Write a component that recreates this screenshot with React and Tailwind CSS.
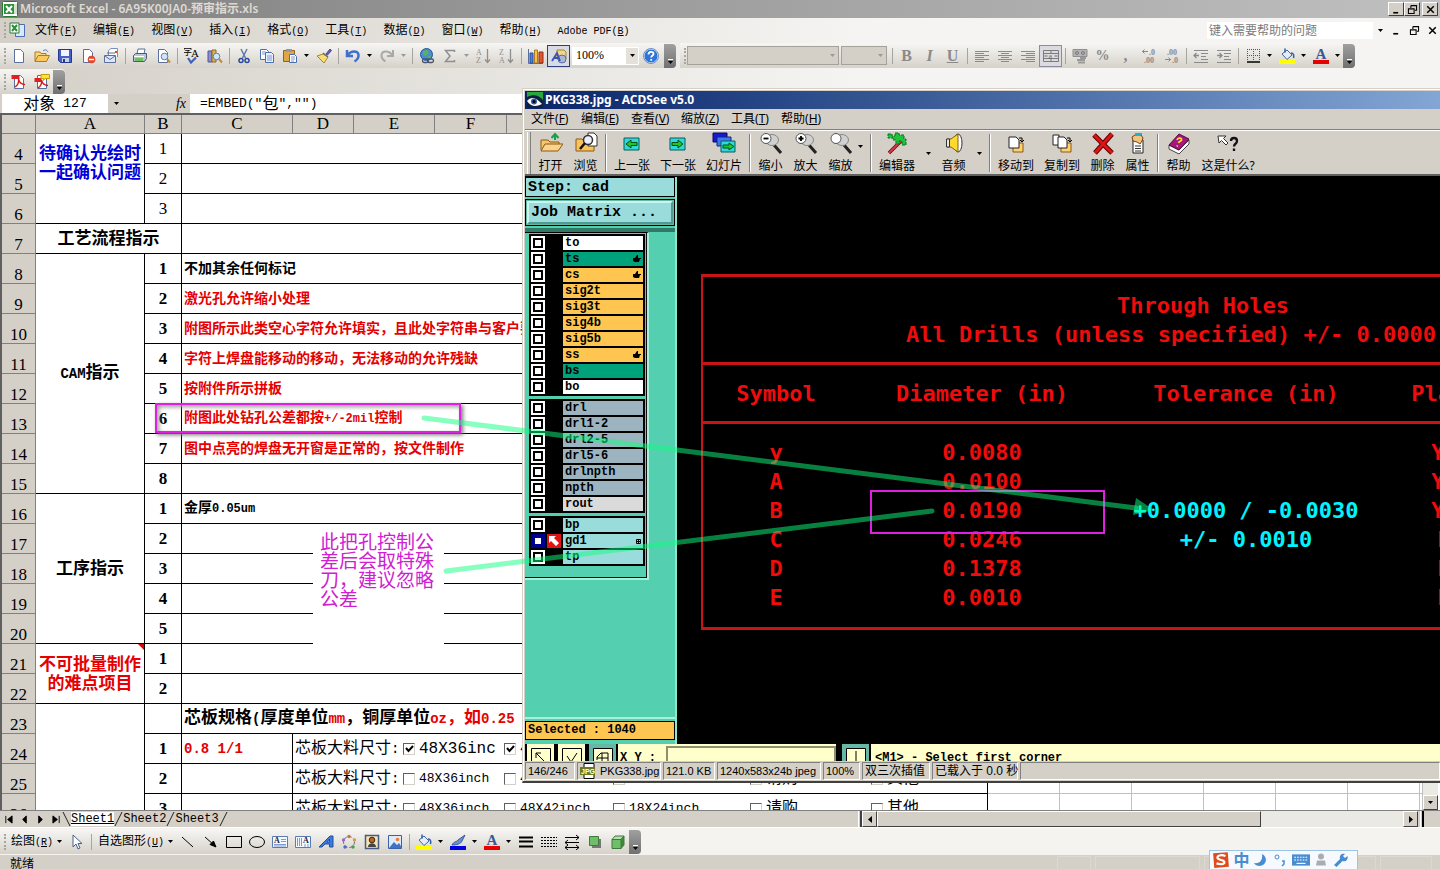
// Desktop: Excel workbook with an ACDSee viewer window in front
import clsx from 'clsx';

const SANS = 'font-["Noto_Sans","Noto_Sans_CJK_SC",sans-serif]';
const ARIAL = 'font-["Liberation_Sans","Noto_Sans_CJK_SC",sans-serif]';
const SONG = 'font-["Liberation_Serif","Noto_Sans_CJK_SC",serif]';
const MONO = 'font-["Liberation_Mono","Noto_Sans_CJK_SC",monospace]';
const CAD = 'font-["DejaVu_Sans_Mono",monospace]';
const BEVEL = 'border border-t-white border-l-white border-r-[#404040] border-b-[#404040] bg-[#d4d0c8]';

// Chinese text with its latin runs set in their own size
const Mixed = ({ text, latin }) =>
    text.split(/([\x20-\x7e]+)/).map((part, i) =>
        /^[\x20-\x7e]/.test(part) ? <span key={i} className={clsx(MONO, latin)}>{part}</span> : part
    );

const Svg = ({ size = 16, box = 16, children }) => (
    <svg width={size} height={size} viewBox={`0 0 ${box} ${box}`} fill="none" className="shrink-0">
        {children}
    </svg>
);

const Caret = ({ color = '#000' }) => (
    <svg width="5" height="3" viewBox="0 0 5 3"><path d="M0 0h5L2.5 3z" fill={color} /></svg>
);

/* ---------- Excel icons, 16 x 16 ---------- */

const page = <path d="M3.5 1.5h6l3 3v10h-9z" fill="#fff" stroke="#5a6f9c" />;
const lens = (
    <>
        <circle cx="9.5" cy="8.5" r="3.3" fill="#cfe6fa" stroke="#6a7f9c" />
        <path d="M12 11l3 3.5" stroke="#c8892c" strokeWidth="2" />
    </>
);

const icons = {
    excel: (
        <>
            <rect x="0.5" y="0.5" width="15" height="15" rx="1" fill="#fff" stroke="#2d7a32" />
            <rect x="9" y="3" width="6" height="10" fill="#cfe8cc" />
            <path d="M2 3h10v10H2z" fill="#2f8f3a" />
            <path d="M4 5l6 6.5M10 5l-6 6.5" stroke="#fff" strokeWidth="2" />
        </>
    ),
    book: (
        <>
            <path d="M6.5 2.5h9v12h-9z" fill="#dbe7fa" stroke="#4b6eb3" />
            <path d="M1 1h9v10H1z" fill="#fff" stroke="#2d7a32" />
            <path d="M3 3l5 6M8 3L3 9" stroke="#2f8f3a" strokeWidth="2" />
        </>
    ),
    fresh: page,
    open: (
        <>
            <path d="M1 13V4h5l1 1.5h5V8" fill="#f5d78a" stroke="#b07a1c" />
            <path d="M1 13.5L4 7.5h11.5L12.5 13.5z" fill="#fbc95c" stroke="#b07a1c" />
            <path d="M9 3c2-2 4-1 5 1" stroke="#4b6eb3" />
        </>
    ),
    save: (
        <>
            <path d="M1.5 1.5h13v13h-11l-2-2z" fill="#4660c8" stroke="#27388c" />
            <path d="M4 2h8v6H4z" fill="#f2f5ff" />
            <path d="M5 10h7v4H5z" fill="#c9d2e8" />
            <path d="M6 11h2v3H6z" fill="#27388c" />
        </>
    ),
    permission: (
        <>
            {page}
            <circle cx="11.5" cy="11.5" r="3.8" fill="#e2452c" />
            <path d="M9 11.5h5" stroke="#fff" strokeWidth="1.5" />
        </>
    ),
    mail: (
        <>
            <path d="M5.5 7V2.5L8 0.5h6.5V9" fill="#fff" stroke="#7c8fb8" />
            <path d="M1.5 7.5h11v7h-11z" fill="#dde6f5" stroke="#5a6f9c" />
            <path d="M2 8l5 3.5L12 8M4 5h8" stroke="#5a6f9c" />
            <path d="M12 3h2v2h-2z" fill="#e2452c" />
        </>
    ),
    print: (
        <>
            <path d="M5 6l1-5h7l-1 5" fill="#fff" stroke="#5a6f9c" />
            <path d="M1.5 7.5l2-2h11v5l-2 3h-11z" fill="#b8c4d8" stroke="#4c5a70" />
            <path d="M3 10h8v3H3z" fill="#6dbf5f" />
            <path d="M2 8.5h10" stroke="#fff" />
        </>
    ),
    preview: <>{page}{lens}</>,
    spell: (
        <>
            <text x="-1" y="7" fontSize="9" fill="#000" className={SONG}>字</text>
            <text x="7" y="9" fontSize="11" fill="#000" className={SONG}>A</text>
            <path d="M4 10l3 4.5L12 9.5" stroke="#3f62b8" strokeWidth="2.2" />
        </>
    ),
    research: (
        <>
            <path d="M1 3h4v11H1z" fill="#8b8fd0" stroke="#50549a" />
            <path d="M5 2h4v12H5z" fill="#d9b45a" stroke="#8d6b20" />
            {lens}
        </>
    ),
    cut: (
        <>
            <path d="M5 1l4.5 9M11 1L6.5 10" stroke="#5d7cab" strokeWidth="1.5" />
            <circle cx="5" cy="12.5" r="2" stroke="#2a4a9c" strokeWidth="1.5" />
            <circle cx="11" cy="12.5" r="2" stroke="#2a4a9c" strokeWidth="1.5" />
        </>
    ),
    copy: (
        <>
            <path d="M1.5 1.5h6l2 2v8h-8z" fill="#fff" stroke="#4b6eb3" />
            <path d="M6.5 4.5h6l2 2v8h-8z" fill="#e9f0fc" stroke="#4b6eb3" />
            <path d="M3 4h4M3 6h3M8 8h5M8 10h5M8 12h5" stroke="#7d9ad0" />
        </>
    ),
    paste: (
        <>
            <path d="M1.5 2.5h11v11h-11z" fill="#e0a544" stroke="#94621a" />
            <path d="M4 1h6v3H4z" fill="#8e99ab" />
            <path d="M7.5 6.5h5l2 2v6h-7z" fill="#fff" stroke="#4b6eb3" />
            <path d="M9 9h4M9 11h4M9 13h3" stroke="#7d9ad0" />
        </>
    ),
    brush: (
        <>
            <path d="M10 6l4-5 1.5 1.5L11.5 7z" fill="#6c63b5" stroke="#46408a" />
            <path d="M1 8l6-2 5 3-4 6z" fill="#f7dd72" stroke="#a8862b" />
            <path d="M7 5l5 4" stroke="#6b6b6b" strokeWidth="1.5" />
        </>
    ),
    undo: <path d="M2 2v6h6M2.5 7.5C6 2 13 2.5 13.5 7c.3 3-1.5 5-4 6.5" stroke="#3f6fcf" strokeWidth="2.5" />,
    redo: <path d="M14 2v6H8M13.5 7.5C10 2 3 2.5 2.5 7c-.3 3 1.5 5 4 6.5" stroke="#a9a9a9" strokeWidth="2" />,
    link: (
        <>
            <circle cx="7.5" cy="6.5" r="6" fill="#4a8bd8" stroke="#23559c" />
            <path d="M4 3l4-1 2 3-3 3-3-1zM8 9l4-2-1 4z" fill="#58b35a" />
            <rect x="3.5" y="11" width="6" height="3.5" rx="1.7" stroke="#46536b" strokeWidth="1.3" />
            <rect x="8.5" y="11" width="6" height="3.5" rx="1.7" stroke="#46536b" strokeWidth="1.3" />
        </>
    ),
    sigma: <path d="M12.5 4V2.5h-9L8 8l-4.5 5.5h9V12" stroke="#8f8f8f" strokeWidth="1.5" />,
    az: (
        <>
            <text x="0" y="7" fontSize="8" fill="#8f8f8f" className={SONG}>A</text>
            <text x="0" y="15" fontSize="8" fill="#8f8f8f" className={SONG}>Z</text>
            <path d="M11.5 1v13M9 11.5l2.5 3 2.5-3" stroke="#8f8f8f" strokeWidth="1.3" />
        </>
    ),
    za: (
        <>
            <text x="0" y="7" fontSize="8" fill="#8f8f8f" className={SONG}>Z</text>
            <text x="0" y="15" fontSize="8" fill="#8f8f8f" className={SONG}>A</text>
            <path d="M11.5 1v13M9 11.5l2.5 3 2.5-3" stroke="#8f8f8f" strokeWidth="1.3" />
        </>
    ),
    chart: (
        <>
            <path d="M0.5 1v14.5H15" stroke="#5a6f9c" />
            <path d="M2 5h3v10H2z" fill="#4f7fe0" stroke="#2a4a9c" />
            <path d="M6.5 2h3v13h-3z" fill="#f6c33e" stroke="#a8782b" />
            <path d="M11 4h4v11h-4z" fill="#e2552c" stroke="#92300f" />
        </>
    ),
    drawing: (
        <>
            <path d="M6 2h7l2 2v7H6z" fill="#f0d58e" stroke="#a8862b" />
            <circle cx="11" cy="11" r="4" fill="#a9b8d8" stroke="#5a6f9c" />
            <path d="M1 13L6 5l3 8M3 10h5" stroke="#3b50b0" strokeWidth="1.8" />
        </>
    ),
    help: (
        <>
            <circle cx="8" cy="8" r="7" fill="#2f74d8" stroke="#d5e4fa" />
            <circle cx="8" cy="8" r="7.5" stroke="#6d90c4" />
            <path d="M5.5 6.5c0-3.5 5-3.5 5-.5 0 1.5-2.3 1.7-2.3 3.5M8.2 11v1.7" stroke="#fff" strokeWidth="1.8" />
        </>
    ),
    left: <path d="M1 3.5h14M1 5.5h9M1 7.5h14M1 9.5h9M1 11.5h14M1 13.5h9" stroke="#8a8a8a" />,
    center: <path d="M1 3.5h14M4 5.5h8M1 7.5h14M4 9.5h8M1 11.5h14M4 13.5h8" stroke="#8a8a8a" />,
    right: <path d="M1 3.5h14M6 5.5h9M1 7.5h14M6 9.5h9M1 11.5h14M6 13.5h9" stroke="#8a8a8a" />,
    merge: (
        <>
            <path d="M0.5 2.5h15v11h-15zM0.5 5.5h15M0.5 10.5h15M8 2.5v3M8 10.5v3" stroke="#7c7c7c" />
            <path d="M1.5 8h3M14.5 8h-3" stroke="#6a6a6a" />
            <text x="5.5" y="10.5" fontSize="8" fill="#666" className={SONG}>a</text>
        </>
    ),
    money: (
        <>
            <path d="M1 1.5h14v7H1z" fill="#b4b4b4" stroke="#8f8f8f" />
            <circle cx="5" cy="5" r="1.5" stroke="#777" />
            <circle cx="11" cy="5" r="1.5" stroke="#777" />
            <path d="M8 10h6M5 12h8M6 14.5h7" stroke="#9a9a9a" strokeWidth="1.8" />
        </>
    ),
    decMore: (
        <>
            <path d="M7 3.5H1M3.5 1.5l-2 2 2 2" stroke="#8a8a8a" />
            <text x="8" y="7" fontSize="8" fontWeight="700" fill="#8a8a8a" className={SONG}>.0</text>
            <text x="3" y="15" fontSize="8" fontWeight="700" fill="#8a8a8a" className={SONG}>.00</text>
        </>
    ),
    decLess: (
        <>
            <text x="3" y="7" fontSize="8" fontWeight="700" fill="#8a8a8a" className={SONG}>.00</text>
            <text x="8" y="15" fontSize="8" fontWeight="700" fill="#8a8a8a" className={SONG}>.0</text>
            <path d="M1 11.5h6M4.5 9.5l2 2-2 2" stroke="#8a8a8a" />
        </>
    ),
    outdent: (
        <>
            <path d="M1 2.5h14M8 5.5h7M8 8.5h5M8 11.5h7M1 14.5h14" stroke="#8a8a8a" />
            <path d="M6 7.5H1M3.5 5L1 7.5 3.500 10" stroke="#8a8a8a" strokeWidth="1.3" />
        </>
    ),
    indent: (
        <>
            <path d="M1 2.5h14M8 5.5h7M8 8.5h5M8 11.5h7M1 14.5h14" stroke="#8a8a8a" />
            <path d="M1 7.5h5M3.5 5L6 7.5 3.500 10" stroke="#8a8a8a" strokeWidth="1.3" />
        </>
    ),
    borders: (
        <>
            <path d="M2.5 1v12M8.5 1v12M14.5 1v12M2 1.5h13M2 7.5h13" stroke="#555" strokeDasharray="1 1" />
            <path d="M2 14h13" stroke="#000" strokeWidth="1.5" />
        </>
    ),
    fill: (
        <>
            <path d="M3 6l5-4 5 5-5 4.5z" fill="#e4ecfa" stroke="#41679c" />
            <path d="M6 0.5v4M12 5c3 0 3 3 2.5 5" stroke="#2f5fae" strokeWidth="1.5" />
            <path d="M0 12h16v4H0z" fill="#ff0" />
        </>
    ),
    fontColor: (
        <>
            <text x="2.5" y="11" fontSize="15" fontWeight="700" fill="#3a5795" className={SONG}>A</text>
            <path d="M0 12h16v4H0z" fill="#e60000" />
        </>
    ),
    pdf: (
        <>
            {page}
            <path d="M0.5 1h8v4h-8z" fill="#e02020" />
            <path d="M4 13c3-2 4-5 3.5-8 1 4 3 5.5 6.5 5.5" stroke="#d81818" strokeWidth="1.3" />
        </>
    ),
    pdfMail: (
        <>
            {page}
            <path d="M0.5 4h7v4h-7z" fill="#e02020" />
            <path d="M4 14c3-2 4-5 3.5-8 1 4 3 5.5 6.5 5.5" stroke="#d81818" strokeWidth="1.3" />
            <path d="M7 0.5h8.5v4H11L9.5 6.5V4.5H7z" fill="#ffe13c" stroke="#c4a000" />
        </>
    ),
    pointer: <path d="M4 1v12l3-3 2 5 2-1-2-4.5h4z" fill="#fff" stroke="#46618e" />,
    line: <path d="M2 3l11 10" stroke="#000" />,
    arrow: <path d="M2 3l9 8M13 13l-6-2.5L10.5 7z" stroke="#000" fill="#000" />,
    rect: <path d="M0.5 2.5h15v11h-15z" stroke="#000" />,
    oval: <ellipse cx="8" cy="8" rx="7.5" ry="5.5" stroke="#000" />,
    textBox: (
        <>
            <path d="M0.5 2.5h15v11h-15z" fill="#f4f8ff" stroke="#5a7ab4" />
            <text x="2" y="9" fontSize="8" fontWeight="700" fill="#223" className={SONG}>A</text>
            <path d="M9 5.5h5M9 7.5h5M2 10.5h12M2 12h12" stroke="#7d9ad0" />
        </>
    ),
    textBoxV: (
        <>
            <path d="M0.5 2.5h15v11h-15z" fill="#f4f8ff" stroke="#5a7ab4" />
            <text x="8" y="9" fontSize="8" fontWeight="700" fill="#223" className={SONG}>A</text>
            <path d="M2.5 4v8M4.5 4v8M6.5 4v8M10 10v3M13 10v3" stroke="#7d9ad0" />
        </>
    ),
    wordArt: <path d="M1 13L12 2h3v11h-3.5v-3H7l-3 3zM11.5 8V5L9 8z" fill="#3a7be0" stroke="#214f9e" />,
    diagram: (
        <>
            <circle cx="8" cy="8" r="5.5" stroke="#667" strokeDasharray="3 2" />
            <circle cx="8" cy="2.5" r="1.7" fill="#c8743c" />
            <circle cx="13.5" cy="6" r="1.7" fill="#d0a04c" />
            <circle cx="12" cy="13" r="1.7" fill="#4a9c4a" />
            <circle cx="4" cy="13" r="1.7" fill="#4a6ed0" />
            <circle cx="2.500" cy="6" r="1.7" fill="#9a6ac0" />
        </>
    ),
    clipArt: (
        <>
            <path d="M1.5 1.5h13v13h-13z" fill="#f6e3b4" stroke="#445b86" strokeWidth="1.5" />
            <circle cx="8" cy="6" r="2.8" fill="#b8642c" stroke="#402810" />
            <path d="M4 13c0-5 8-5 8 0z" fill="#444" />
        </>
    ),
    picture: (
        <>
            <path d="M1.5 1.5h13v13h-13z" fill="#dceafc" stroke="#3b62a8" />
            <circle cx="10.5" cy="5.5" r="1.8" fill="#f08030" />
            <path d="M2 14l5-6 3 3 2-2 3 5z" fill="#3f74c4" />
        </>
    ),
    lineColor: (
        <>
            <path d="M2 11c2-4 5-3 6-5l7-5-3 6c-1 3-6 4-10 4z" fill="#6d8fd0" stroke="#3a5795" />
            <path d="M0 12h16v4H0z" fill="#0000e0" />
        </>
    ),
    weight: <path d="M1 3.500h14M1 7.500h14M1 12.500h14" stroke="#000" strokeWidth="2" />,
    dash: <path d="M0 3.5h16M0 6.5h16M0 9.5h16M0 12.5h16" stroke="#000" strokeDasharray="2 1" />,
    arrows: <path d="M1 3.5h14M12 1l3 2.5L12 6M1 8.5h14M4 6L1 8.5 4 11M1 13.5h14M4 11l-3 2.5L4 16M12 11l3 2.5L12 16" stroke="#000" />,
    shadow: (
        <>
            <path d="M5 5h9v9H5z" fill="#777" />
            <path d="M2.5 2.5h9v9h-9z" fill="#6fbf6a" stroke="#3f7a3c" />
        </>
    ),
    cube: (
        <>
            <path d="M2 5.5l3-3.5h9l-3 3.5z" fill="#b5e0ae" stroke="#3f7a3c" />
            <path d="M11 5.5L14 2v9l-3 3.5z" fill="#3f8a3c" stroke="#3f7a3c" />
            <path d="M2 5.5h9v9H2z" fill="#6fbf6a" stroke="#3f7a3c" />
        </>
    ),
    min: <path d="M4 12h6" stroke="#000" strokeWidth="2" />,
    restore: <path d="M6 3h7v6h-2M3 7h7v6H3zM6 3v3M3 7.5h7M6 3.5h7" stroke="#000" strokeWidth="1.3" />,
    close: <path d="M4 4l8 8M12 4l-8 8" stroke="#000" strokeWidth="1.8" />,
};

/* ---------- ACDSee icons, 24 x 24 ---------- */

const magnifier = (sign) => (
    <>
        <path d="M15 13l7 8" stroke="#222" strokeWidth="3" />
        <ellipse cx="13" cy="8" rx="6.5" ry="5.5" fill="#d0d0d0" stroke="#888" />
        <circle cx="7" cy="6.5" r="5" fill="#fff" stroke="#555" />
        {sign && <path d={sign} stroke="#000" strokeWidth="1.8" />}
    </>
);
const arrowCard = (d) => (
    <>
        <path d="M4 6h15v12H4z" fill="#2fd9d9" stroke="#0a5a5a" />
        <path d={d} fill="#22c432" stroke="#064d10" />
    </>
);

const viewerIcons = {
    open: (
        <>
            <path d="M2 18V8h7l2 2h9v3" fill="#f7c66b" stroke="#8a5a14" />
            <path d="M2 19l4-7h18l-5 7z" fill="#fbd38a" stroke="#8a5a14" />
            <path d="M16 8V3M12.5 6L16 2l3.5 4" stroke="#18a048" strokeWidth="2" />
        </>
    ),
    browse: (
        <>
            <path d="M2 19V7h6l2 2h10v10z" fill="#f9c25a" stroke="#8a5a14" />
            <path d="M14 1h6l3 3v10h-9z" fill="#fff" stroke="#333" />
            <circle cx="14" cy="8" r="4.5" fill="#eef" stroke="#333" strokeWidth="1.5" />
            <path d="M11 11l-5 6" stroke="#111" strokeWidth="2.5" />
        </>
    ),
    prev: arrowCard('M6 12L11 8v2.500h6v3h-6V16z'),
    next: arrowCard('M17 12L12 8v2.500H6v3h6V16z'),
    slides: (
        <>
            <path d="M1 1h14v9H1z" fill="#1818d0" stroke="#0a0a60" />
            <path d="M5 5h14v9H5z" fill="#3c78f0" stroke="#0a2a80" />
            <path d="M9 9h14v11H9z" fill="#2fd9d9" stroke="#0a5a5a" />
            <path d="M22 14.5L17 11v2h-6v3h6v2z" fill="#22c432" stroke="#064d10" />
        </>
    ),
    zoomOut: magnifier('M4.5 6.5h5'),
    zoomIn: magnifier('M4.5 6.5h5M7 4v5'),
    zoom: magnifier(),
    editor: (
        <>
            <path d="M16 9L4 21" stroke="#601018" strokeWidth="3.500" />
            <path d="M16 9L4 21" stroke="#d83a48" strokeWidth="1.800" />
            <path d="M3 2h4v2h3V1h4v2h5v4h2v6h-4V9h-3v3h-3V8H8V6H3z" fill="#1fc23c" stroke="#087020" strokeDasharray="3 1" />
        </>
    ),
    audio: (
        <>
            <ellipse cx="16" cy="11" rx="4" ry="9" fill="#fff" stroke="#333" />
            <path d="M5 7h4l7-5v18l-7-5H5z" fill="#ffd92e" stroke="#7a6410" />
            <path d="M4.500 7h3v8h-3z" fill="#e8e8e8" stroke="#333" />
        </>
    ),
    move: (
        <>
            <path d="M9 11h10v9H9z" fill="#ffcf70" stroke="#8a5a14" />
            <path d="M5 5h7l3 3v8H5z" fill="#fff" stroke="#222" />
            <path d="M15 6h3v4M16 8l2 2 2-2" stroke="#000" />
        </>
    ),
    copy: (
        <>
            <path d="M11 11h10v9H11z" fill="#ffcf70" stroke="#8a5a14" />
            <path d="M3 3h6v10H3z" fill="#fff" stroke="#222" />
            <path d="M8 5h6l3 3v8H8z" fill="#fff" stroke="#222" />
            <path d="M17 6h3v4M18 8l2 2 2-2" stroke="#000" />
        </>
    ),
    remove: (
        <>
            <path d="M3 3l18 18M21 2L4 21" stroke="#5a0000" strokeWidth="5" />
            <path d="M3 3l18 18M21 2L4 21" stroke="#e01414" strokeWidth="3" />
        </>
    ),
    props: (
        <>
            <path d="M7 8h10v13H7z" fill="#fff" stroke="#222" />
            <path d="M9 14h6M9 16.5h6M9 19h6" stroke="#333" />
            <path d="M6 5l3-2h6l2 3-1 3-2 3-3-2-4-1z" fill="#f4c27c" stroke="#6e4516" />
            <path d="M9 1h7v2H9z" fill="#1fb0c8" />
        </>
    ),
    help: (
        <>
            <path d="M2 13l10 5 10-10v4L12 22 2 17z" fill="#fff" stroke="#444" />
            <path d="M2 13L12 2l10 5-10 11z" fill="#a3187c" stroke="#56083f" />
            <path d="M10 8c1-3 5-2 4.5 0-.5 1.5-2.5 1-3 3M10.5 13.5l-.5 1" stroke="#ffd92e" strokeWidth="1.8" />
        </>
    ),
    what: (
        <>
            <path d="M2 4h8L7.500 6.500 12 11l-2 2-4.500-4.500L3 11z" fill="#fff" stroke="#333" />
            <path d="M15 9c0-4 6-4 6 0 0 3-3 2.500-3 5.500M18 16.500v2.500" stroke="#111" strokeWidth="2.300" />
        </>
    ),
};

/* ---------- Excel chrome ---------- */

const IconButton = ({ name, label, boxed }) => (
    <button
        aria-label={label || name}
        className={clsx(
            'w-[23px] h-[22px] shrink-0 flex items-center justify-center',
            boxed === 'blue' && 'border border-[#2a3f7c] bg-[#d8dbe6]',
            boxed === 'gray' && 'border border-[#8c8c9c] bg-[#dadae0]'
        )}
    >
        <Svg>{icons[name]}</Svg>
    </button>
);

const Sep = () => (
    <span className="w-1.5 shrink-0 flex justify-center">
        <span className="w-px h-4 bg-[#a8a59e]" />
    </span>
);

const Drop = ({ color }) => (
    <button aria-label="more" className="w-[11px] h-5 shrink-0 flex items-center justify-center"><Caret color={color} /></button>
);

const Grip = () => <span className="w-0.5 h-4 ml-1 mr-px shrink-0 border-l-2 border-dotted border-[#a8a59e]" />;

const BarEnd = () => (
    <button aria-label="toolbar options" className="w-3 h-6 shrink-0 rounded-r-sm bg-gradient-to-b from-[#a0a0a0] to-[#707070] flex flex-col items-center justify-end gap-px pb-1">
        <span className="w-[5px] h-px bg-white" />
        <Caret />
    </button>
);

const boxes = { drawing: 'blue', merge: 'gray' };

// Turns a list of icon names, '|' separators and 'v' drop arrows into buttons
const Strip = ({ items }) =>
    items.map((item, i) => {
        if (item === '|') return <Sep key={i} />;
        if (item === 'v') return <Drop key={i} />;
        if (item === 'gv') return <Drop key={i} color="#999" />;
        return <IconButton key={i} name={item} boxed={boxes[item]} />;
    });

const BAR = 'h-[25px] flex items-center rounded-r bg-gradient-to-b from-[#f7f6f4] to-[#d6d2ca]';

const menus = [
    ['文件', 'F'], ['编辑', 'E'], ['视图', 'V'], ['插入', 'I'], ['格式', 'O'],
    ['工具', 'T'], ['数据', 'D'], ['窗口', 'W'], ['帮助', 'H'], ['Adobe PDF', 'B'],
];

const WindowButton = ({ name, className }) => (
    <button aria-label={name} className={clsx('w-4 h-3.5 flex items-center justify-center', BEVEL, className)}>
        <Svg size={13}>{icons[name]}</Svg>
    </button>
);

const ExcelTop = () => (
    <header className="shrink-0">
        {/* Title bar */}
        <div className="h-[18px] flex items-center gap-0.5 px-0.5 bg-gradient-to-r from-[#808080] to-[#c0c0c0]">
            <Svg>{icons.excel}</Svg>
            <h1 className={clsx('flex-1 text-xs leading-4 font-semibold text-[#dedad2]', SANS)}>Microsoft Excel - 6A95K00JA0-预审指示.xls</h1>
            <div className="flex">
                <WindowButton name="min" />
                <WindowButton name="restore" />
                <WindowButton name="close" className="ml-0.5" />
            </div>
        </div>

        <div className="bg-gradient-to-r from-[#d4d0c8] to-[#f5f4f2] to-60%">
            {/* Menu bar */}
            <div className="h-6 flex items-center gap-0.5">
                <Grip />
                <Svg>{icons.book}</Svg>
                <nav className={clsx('flex gap-4 pl-2 text-xs flex-1', SONG)}>
                    {menus.map(([name, key]) => (
                        <button key={key} className="whitespace-nowrap">
                            <Mixed text={name} latin="text-[10px]" />
                            <span className={clsx('text-[10px]', MONO)}>(<u>{key}</u>)</span>
                        </button>
                    ))}
                </nav>
                <input aria-label="help question" placeholder="键入需要帮助的问题" className={clsx('w-[166px] h-[17px] px-0.5 bg-white text-xs placeholder:text-[#7b7b7b]', SANS)} />
                <Drop />
                <div className="flex gap-0.5">
                    {['min', 'restore', 'close'].map((name) => (
                        <button key={name} aria-label={name} className="w-4 flex justify-center"><Svg size={13}>{icons[name]}</Svg></button>
                    ))}
                </div>
            </div>

            {/* Standard and formatting bars */}
            <div className="h-[27px] flex items-center gap-1">
                <div className={BAR}>
                    <Grip />
                    <Strip
                        items={[
                            'fresh', 'open', 'save', 'permission', 'mail', '|', 'print', 'preview', '|', 'spell', 'research', '|',
                            'cut', 'copy', 'paste', 'v', 'brush', '|', 'undo', 'v', 'redo', 'gv', '|', 'link', 'sigma', 'gv', 'az', 'za', '|',
                            'chart', 'drawing',
                        ]}
                    />
                    <div className="relative ml-0.5 bg-white">
                        <select aria-label="zoom" className={clsx('appearance-none block w-[67px] h-[18px] pl-1 pb-0.5 text-xs leading-4', SONG)}>
                            <option>100%</option>
                        </select>
                        <span className="absolute inset-y-px right-px w-3 bg-[#e4e1db] flex items-center justify-center pointer-events-none"><Caret /></span>
                    </div>
                    <IconButton name="help" />
                    <span className="w-0.5" />
                    <BarEnd />
                </div>
                <div className={BAR}>
                    <Grip />
                    {['w-[152px]', 'w-[46px]'].map((width, i) => (
                        <div key={width} className={clsx('relative mr-0.5', width)}>
                            <select aria-label={i ? 'font size' : 'font'} disabled className="appearance-none block w-full h-[19px] border border-[#a5a29b] bg-[#d4d0c8]">
                                <option></option>
                            </select>
                            <span className="absolute inset-y-0 right-1 flex items-center pointer-events-none"><Caret color="#999" /></span>
                        </div>
                    ))}
                    <Sep />
                    <button className={clsx('w-[23px] text-base leading-5 font-bold text-[#8a8a8a]', SONG)}>B</button>
                    <button className={clsx('w-[23px] text-base leading-5 italic font-bold text-[#8a8a8a]', SONG)}>I</button>
                    <button className={clsx('w-[23px] text-base leading-5 font-bold underline text-[#8a8a8a]', SONG)}>U</button>
                    <Strip items={['|', 'left', 'center', 'right', 'merge', '|', 'money']} />
                    <button className={clsx('w-[23px] text-sm leading-5 font-bold text-[#8a8a8a]', SONG)}>%</button>
                    <button className={clsx('w-[23px] text-base leading-5 font-bold text-[#8a8a8a]', SONG)}>,</button>
                    <Strip items={['decMore', 'decLess', '|', 'outdent', 'indent', '|', 'borders', 'v', 'fill', 'v', 'fontColor', 'v']} />
                    <BarEnd />
                </div>
            </div>

            {/* PDF bar */}
            <div className="h-[25px] flex">
                <div className={BAR}>
                    <Grip />
                    <Strip items={['pdf', 'pdfMail']} />
                    <BarEnd />
                </div>
            </div>
        </div>

        {/* Formula bar */}
        <div className={clsx('h-[19px] flex items-center pl-0.5 text-base leading-4', SONG)}>
            <div className="w-[106px] h-full bg-white flex items-center justify-center gap-2">
                对象 <span className={clsx('text-[13px]', MONO)}>127</span>
            </div>
            <button aria-label="names" className="w-4 flex justify-center"><Caret /></button>
            <button className="ml-auto w-16 pr-1 text-right text-sm leading-4 italic">fx</button>
            <div className="w-[calc(100%-188px)] h-full bg-white pl-2.5 flex items-center whitespace-pre">
                <Mixed text={'=EMBED("包","")'} latin="text-[13px]" />
            </div>
        </div>
    </header>
);

/* ---------- Worksheet ---------- */

const CELL = 'border-r border-b border-black p-0';
const HEAD = 'border-r border-b border-[#808080] bg-[#d4d0c8] p-0 font-normal';
const RED = 'text-[#e60000]';

const RowHead = ({ n }) => <th scope="row" className={clsx(HEAD, 'align-bottom text-[17px] leading-4')}>{n}</th>;
const Num = ({ n, light }) => <td className={clsx(CELL, 'text-center text-[17px] leading-5', !light && 'font-bold')}>{n}</td>;
const Group = ({ span, cols, className, children }) => (
    <td rowSpan={span} colSpan={cols} className={clsx(CELL, 'relative text-center text-[17px] leading-[19px] font-bold', className)}>
        {children}
    </td>
);
const Blank = () => [...Array(7)].map((_, i) => <td key={i} className="border-r border-b border-[#c0c0c0] p-0" />);

const notes = [
    { row: 8, group: 'CAM指示', span: 8, n: 1, text: '不加其余任何标记' },
    { row: 9, n: 2, text: '激光孔允许缩小处理', red: true },
    { row: 10, n: 3, text: '附图所示此类空心字符允许填实，且此处字符串与客户要求', red: true },
    { row: 11, n: 4, text: '字符上焊盘能移动的移动，无法移动的允许残缺', red: true },
    { row: 12, n: 5, text: '按附件所示拼板', red: true },
    { row: 13, n: 6, text: '附图此处钻孔公差都按+/-2mil控制', red: true },
    { row: 14, n: 7, text: '图中点亮的焊盘无开窗是正常的，按文件制作', red: true },
    { row: 15, n: 8, text: '' },
    { row: 16, group: '工序指示', span: 5, n: 1, text: '金厚0.05um' },
    { row: 17, n: 2, text: '' },
    { row: 18, n: 3, text: '' },
    { row: 19, n: 4, text: '' },
    { row: 20, n: 5, text: '' },
];

const sizes = [
    ['48X36inch', 'w-[101px]'], ['48X42inch', 'w-[109px]'], ['18X24inch', 'w-[137px]'], ['请购', 'w-[121px]'], ['其他', 'w-20'],
];

const SizeRow = ({ big }) => (
    <div className="h-[29px] flex items-center pl-0.5 whitespace-nowrap">
        <span className="w-[108px] shrink-0 text-base leading-5">芯板大料尺寸<span className={clsx('text-sm', MONO)}>:</span></span>
        {sizes.map(([label, width], i) => (
            <label key={label} className={clsx('shrink-0 flex items-center', width)}>
                <input
                    type="checkbox"
                    defaultChecked={big && i < 2}
                    className="peer appearance-none size-3 shrink-0 bg-white border border-t-[#606060] border-l-[#606060] border-r-[#d4d0c8] border-b-[#d4d0c8]"
                />
                <svg width="9" height="8" viewBox="0 0 9 8" fill="none" className="invisible peer-checked:visible shrink-0 -ml-2.5 mr-px">
                    <path d="M1 3l2.5 3L8 1" stroke="#000" strokeWidth="2" />
                </svg>
                <span className={clsx('pl-1 leading-5', i > 2 || big ? 'text-base' : 'text-[13px]', MONO)}>
                    {big && i === 0 ? '48X36inc' : label}
                </span>
            </label>
        ))}
    </div>
);

const Sheet = () => (
    <main className={clsx('flex-1 min-h-0 flex border-t-2 border-l-2 border-[#606060] bg-white overflow-hidden', SONG)}>
        <div className="flex-1 min-w-0 relative overflow-hidden">
            <table className="w-full table-fixed border-separate border-spacing-0">
                <colgroup>
                    <col className="w-[34px]" />
                    <col className="w-[109px]" />
                    <col className="w-[37px]" />
                    <col className="w-[111px]" />
                    <col className="w-[61px]" />
                    <col className="w-[81px]" />
                    <col className="w-[72px]" />
                    <col />
                    <col className="w-[72px]" />
                    <col className="w-[72px]" />
                    <col className="w-[72px]" />
                    <col className="w-[72px]" />
                    <col className="w-[72px]" />
                    <col className="w-[72px]" />
                    <col className="w-[3px]" />
                </colgroup>
                <thead>
                    <tr className="h-[19px] text-[17px] leading-[18px]">
                        <th className={HEAD} />
                        {['A', 'B', 'C', 'D', 'E', 'F', 'G', 'H', 'I', 'J', 'K', 'L', 'M'].map((c) => (
                            <th key={c} scope="col" className={HEAD}>{c}</th>
                        ))}
                        <th className={HEAD} />
                    </tr>
                </thead>
                <tbody>
                    {[4, 5, 6].map((row) => (
                        <tr key={row} className="h-[30px]">
                            <RowHead n={row} />
                            {row === 4 && <Group span={3} className="align-top pt-2.5 text-[#0000d8]">待确认光绘时<br />一起确认问题</Group>}
                            <Num n={row - 3} light />
                            <td colSpan={5} className={CELL} />
                            <Blank />
                        </tr>
                    ))}
                    <tr className="h-[30px]">
                        <RowHead n={7} />
                        <Group cols={2}>工艺流程指示</Group>
                        <td colSpan={5} className={CELL} />
                        <Blank />
                    </tr>
                    {notes.map(({ row, group, span, n, text, red }) => (
                        <tr key={row} className="h-[30px]">
                            <RowHead n={row} />
                            {group && <Group span={span}><Mixed text={group} latin="text-sm" /></Group>}
                            <Num n={n} />
                            <td colSpan={5} className={clsx(CELL, 'pl-0.5 text-sm leading-4 font-bold whitespace-nowrap', red && RED)}>
                                <Mixed text={text} latin="text-xs" />
                            </td>
                            <Blank />
                        </tr>
                    ))}
                    {[21, 22].map((row) => (
                        <tr key={row} className="h-[30px]">
                            <RowHead n={row} />
                            {row === 21 && (
                                <Group span={2} className={RED}>
                                    不可批量制作<br />的难点项目
                                    <svg width="6" height="6" viewBox="0 0 6 6" className="absolute top-0 right-0"><path d="M0 0h6v6z" fill="#e60000" /></svg>
                                </Group>
                            )}
                            <Num n={row - 20} />
                            <td colSpan={5} className={CELL} />
                            <Blank />
                        </tr>
                    ))}
                    <tr className="h-[30px]">
                        <RowHead n={23} />
                        <Group span={4} />
                        <Num />
                        <td colSpan={5} className={clsx(CELL, 'pl-0.5 text-[17px] leading-5 font-bold whitespace-nowrap')}>
                            <Mixed text="芯板规格(厚度单位" latin="text-sm" />
                            <span className={RED}><Mixed text="mm" latin="text-sm" /></span>，铜厚单位
                            <span className={RED}><Mixed text="oz，如0.25" latin="text-sm" /></span>
                        </td>
                        <Blank />
                    </tr>
                    {[24, 25, 26].map((row) => (
                        <tr key={row} className="h-[30px]">
                            <RowHead n={row} />
                            <Num n={row - 23} />
                            <td className={clsx(CELL, 'pl-0.5 text-sm font-bold', MONO, RED)}>{row === 24 && '0.8 1/1'}</td>
                            <td colSpan={4} className={CELL}><SizeRow big={row === 24} /></td>
                            <Blank />
                        </tr>
                    ))}
                </tbody>
            </table>
        </div>
        {/* Vertical scroll bar */}
        <div className="w-[15px] mr-0.5 flex flex-col justify-end bg-[#ebe9e4]">
            <button aria-label="scroll down" className={clsx('h-[15px] flex items-center justify-center', BEVEL)}><Caret /></button>
        </div>
    </main>
);

const Slash = ({ back }) => (
    <svg width="9" height="15" viewBox="0 0 9 15" fill="none" className="shrink-0">
        <path d={back ? 'M1 0l7 14' : 'M8 0L1 14'} stroke="#222" />
    </svg>
);

const navPaths = ['M2 1v8M9 1v8L4 5z', 'M7 1v8L3 5z', 'M3 1v8l4-4z', 'M8 1v8M1 1v8l5-4z'];

const ExcelBottom = () => (
    <footer className="shrink-0">
        {/* Sheet tabs and horizontal scroll bar */}
        <div className="h-[18px] flex items-center border-t border-[#808080] border-b border-b-white">
            <div className="flex gap-1 pl-0.5">
                {navPaths.map((d) => (
                    <button key={d} aria-label="sheet navigation" className="w-3 flex justify-center">
                        <svg width="9" height="9" viewBox="0 0 10 10"><path d={d} fill="#000" stroke="#000" /></svg>
                    </button>
                ))}
            </div>
            <div className={clsx('flex items-center text-xs leading-[14px]', MONO)}>
                <Slash back />
                <button className="bg-white underline">Sheet1</button>
                <Slash />
                <button>Sheet2</button>
                <Slash />
                <button>Sheet3</button>
                <Slash />
            </div>
            <div className="ml-auto w-[582px] h-4 flex">
                <span className="w-1 border-l border-white border-r-2 border-r-[#404040]" />
                <button aria-label="scroll left" className={clsx('w-[15px] flex items-center justify-center', BEVEL)}>
                    <svg width="4" height="7" viewBox="0 0 4 7"><path d="M4 0v7L0 3.5z" /></svg>
                </button>
                <div className={clsx('w-[384px]', BEVEL)} />
                <div className="flex-1 bg-[#ebe9e4]" />
                <button aria-label="scroll right" className={clsx('w-[15px] flex items-center justify-center', BEVEL)}>
                    <svg width="4" height="7" viewBox="0 0 4 7"><path d="M0 0v7l4-3.5z" /></svg>
                </button>
                <span className="w-1 ml-0.5 border-l border-white border-r-2 border-r-black" />
                <span className="w-4" />
            </div>
        </div>

        {/* Drawing bar */}
        <div className={clsx('h-[27px] flex items-center bg-[#f4f3f0] text-xs', SONG)}>
            <div className={BAR}>
                <Grip />
                <button className="w-[47px] pl-1 text-left whitespace-nowrap">绘图<span className={clsx('text-[10px]', MONO)}>(<u>R</u>)</span></button>
                <Drop />
                <IconButton name="pointer" />
                <Sep />
                <button className="w-[71px] pl-1 text-left whitespace-nowrap">自选图形<span className={clsx('text-[10px]', MONO)}>(<u>U</u>)</span></button>
                <Drop />
                <Strip
                    items={[
                        'line', 'arrow', 'rect', 'oval', 'textBox', 'textBoxV', 'wordArt', 'diagram', 'clipArt', 'picture', '|',
                        'fill', 'v', 'lineColor', 'v', 'fontColor', 'v', 'weight', 'dash', 'arrows', 'shadow', 'cube',
                    ]}
                />
                <BarEnd />
            </div>
        </div>

        {/* Status bar */}
        <div className={clsx('h-3.5 pl-2.5 pt-px flex text-xs leading-4 overflow-hidden', SANS)}>
            就绪
            <div className="ml-auto flex gap-1 pr-2">
                {['w-[34px]', 'w-[105px]', 'w-[116px]', 'w-[52px]', 'w-[52px]'].map((w, i) => (
                    <span key={i} className={clsx('h-4 border border-[#dcd9d2]', w)} />
                ))}
            </div>
        </div>
    </footer>
);

/* ---------- ACDSee window ---------- */

const viewerMenus = [['文件', 'F'], ['编辑', 'E'], ['查看', 'V'], ['缩放', 'Z'], ['工具', 'T'], ['帮助', 'H']];

const viewerTools = [
    { label: '打开', icon: 'open', w: 'w-[35px]' },
    { label: '浏览', icon: 'browse', w: 'w-[35px]' },
    '|',
    { label: '上一张', icon: 'prev', w: 'w-[46px]' },
    { label: '下一张', icon: 'next', w: 'w-[46px]' },
    { label: '幻灯片', icon: 'slides', w: 'w-[46px]' },
    '|',
    { label: '缩小', icon: 'zoomOut', w: 'w-[35px]' },
    { label: '放大', icon: 'zoomIn', w: 'w-[35px]' },
    { label: '缩放', icon: 'zoom', w: 'w-[35px]' },
    'v',
    '|',
    { label: '编辑器', icon: 'editor', w: 'w-[46px]' },
    'V',
    { label: '音频', icon: 'audio', w: 'w-[35px]' },
    'V',
    '|',
    { label: '移动到', icon: 'move', w: 'w-[46px]' },
    { label: '复制到', icon: 'copy', w: 'w-[46px]' },
    { label: '删除', icon: 'remove', w: 'w-[35px]' },
    { label: '属性', icon: 'props', w: 'w-[35px]' },
    '|',
    { label: '帮助', icon: 'help', w: 'w-[35px]' },
    { label: '这是什么?', icon: 'what', w: 'w-16' },
];

const layerGroups = [
    [
        ['to', 'bg-white'], ['ts', 'bg-[#00a27c]', 'hand'], ['cs', 'bg-[#fec650]', 'hand'], ['sig2t', 'bg-[#fec650]'], ['sig3t', 'bg-[#fec650]'],
        ['sig4b', 'bg-[#fec650]'], ['sig5b', 'bg-[#fec650]'], ['ss', 'bg-[#fec650]', 'hand'], ['bs', 'bg-[#00a27c]'], ['bo', 'bg-white'],
    ],
    [
        ['drl', 'bg-[#9bb4bf]'], ['drl1-2', 'bg-[#9bb4bf]'], ['drl2-5', 'bg-[#9bb4bf]'], ['drl5-6', 'bg-[#9bb4bf]'],
        ['drlnpth', 'bg-[#9bb4bf]'], ['npth', 'bg-[#9bb4bf]'], ['rout', 'bg-[#dadada]'],
    ],
    [['bp', 'bg-[#9adcdc]'], ['gd1', 'bg-[#9adcdc]', 'grid'], ['tp', 'bg-[#9adcdc]']],
];

const drills = [
    ['y', '0.0080', '', 'YES'],
    ['A', '0.0100', '', 'YES'],
    ['B', '0.0190', '+0.0000 / -0.0030', 'YES'],
    ['C', '0.0246', '+/- 0.0010', 'NO'],
    ['D', '0.1378', '', 'NO'],
    ['E', '0.0010', '', 'NO'],
];

const LayerRow = ({ name, color, mark }) => {
    const active = name === 'gd1';
    return (
        <label className="h-4 flex items-center gap-0.5">
            <input
                type="checkbox"
                className={clsx(
                    'appearance-none size-3.5 shrink-0 bg-white',
                    active ? 'border-4 border-[#000090]' : 'border-2 border-white shadow-[inset_0_0_0_2px_#000]'
                )}
            />
            <span className={clsx('size-3.5 shrink-0 flex items-center justify-center', active && 'bg-[#e01414]')}>
                {active && (
                    <svg width="10" height="10" viewBox="0 0 10 10"><path d="M0 0h7L5 2l5 5-3 3-5-5-2 2z" fill="#fff" /></svg>
                )}
            </span>
            <span className={clsx('flex-1 h-3.5 px-0.5 flex items-center justify-between', color)}>
                {name}
                {mark === 'hand' && (
                    <svg width="8" height="8" viewBox="0 0 8 8"><path d="M0 3h2l2-3h1v3h3v1H7L6 7H2L0 6z" fill="#000" /></svg>
                )}
                {mark === 'grid' && (
                    <svg width="5" height="5" viewBox="0 0 5 5"><path d="M.5.5h4v4h-4zM2.5 0v5M0 2.5h5" stroke="#000" fill="none" /></svg>
                )}
            </span>
        </label>
    );
};

const LayerPanel = () => (
    <aside className={clsx('w-[152px] shrink-0 flex flex-col bg-[#54cfb0] border-r-2 border-[#8fe6cf] text-black font-bold', MONO)}>
        <div className="h-5 border border-black bg-[#9adcdc] pl-0.5 text-[15px] leading-5">Step: cad</div>
        <div className="mt-0.5 p-px border border-black bg-[#66b8a4]">
            <button className="w-full h-[23px] border-2 border-t-[#c8f4f0] border-l-[#c8f4f0] border-r-[#4f9a92] border-b-[#4f9a92] bg-[#9adcdc] pl-0.5 text-left text-[15px] leading-[18px]">
                Job Matrix ...
            </button>
        </div>
        <div className="mt-0.5 h-1 bg-[#2f7a66]" />
        <div className="w-[124px] pt-px pl-1 pb-3 pr-0.5 border-t border-r-2 border-b-2 border-t-black border-r-[#a6f0dc] border-b-[#a6f0dc] shadow-[inset_-1px_-1px_0_#111] flex flex-col gap-[3px] text-xs leading-[14px]">
            {layerGroups.map((group, i) => (
                <div key={i} className="bg-black py-px px-0.5">
                    {group.map(([name, color, mark]) => (
                        <LayerRow key={name} name={name} color={color} mark={mark} />
                    ))}
                </div>
            ))}
        </div>
        <div className="mt-auto border-t-2 border-[#a6f0dc] pt-0.5 pb-1">
            <div className="h-[19px] border border-black bg-[#fec650] pl-0.5 text-xs leading-4">Selected : 1040</div>
        </div>
    </aside>
);

const DrillTable = () => (
    <div className={clsx('flex-1 min-w-0 overflow-hidden bg-black pt-[97px] pl-6', CAD)}>
        <table className="w-[1002px] table-fixed border-separate border-spacing-0 border-l-2 border-t-[3px] border-[#c81414] text-[22px] leading-[29px] font-bold text-[#ee0c0c] whitespace-nowrap">
            <colgroup>
                <col className="w-[146px]" />
                <col className="w-[266px]" />
                <col className="w-[262px]" />
                <col className="w-[148px]" />
                <col />
            </colgroup>
            <thead>
                <tr className="h-[88px]">
                    <th colSpan={5} className="p-0 border-b-[3px] border-[#c81414]">
                        <p>Through Holes</p>
                        <p className="pr-16">All Drills (unless specified) +/- 0.0000</p>
                    </th>
                </tr>
                <tr className="h-[59px]">
                    {['Symbol', 'Diameter (in)', 'Tolerance (in)', 'Plated', ''].map((h) => (
                        <th key={h} className="p-0 border-b-[3px] border-[#c81414]">{h}</th>
                    ))}
                </tr>
            </thead>
            <tbody className="text-center">
                <tr className="h-3.5"><td colSpan={5} className="p-0" /></tr>
                {drills.map(([symbol, dia, tol, plated]) => (
                    <tr key={symbol}>
                        <td className="p-0">{symbol}</td>
                        <td className="p-0">{dia}</td>
                        <td className="p-0 text-[#00f4ff]">{tol}</td>
                        <td className="p-0">{plated}</td>
                        <td className="p-0" />
                    </tr>
                ))}
                <tr className="h-[18px]"><td colSpan={5} className="p-0 border-b-[3px] border-[#c81414]" /></tr>
            </tbody>
        </table>
    </div>
);

const CadButton = ({ d, teal }) => (
    <button aria-label="cad tool" className={clsx('w-[31px] shrink-0 flex justify-center pt-1 border-l-2 border-r-2 border-black', teal ? 'bg-[#66b8a4]' : 'bg-[#ffffcc]')}>
        <svg width="20" height="20" viewBox="0 0 20 20" fill="#ffffcc"><path d={`M.5.5h19v19H.5z${d}`} stroke="#000" /></svg>
    </button>
);

const CommandStrip = () => (
    <div className={clsx('h-[17px] shrink-0 flex overflow-hidden bg-[#ffffcc] text-xs leading-4 font-bold text-black', MONO)}>
        <CadButton d="M5 10V5h5M5 5l9 9" />
        <CadButton d="M5 8l4 6 6-9" />
        <CadButton teal d="M4 12V9l4-4h7v9H4M9 5v9M4 10h11" />
        <label htmlFor="xy" className="w-12 pl-0.5 pt-1.5">X Y :</label>
        <input id="xy" defaultValue="" className="w-[170px] h-6 shrink-0 mt-0.5 border-2 border-[#8f8f70] bg-[#ffffcc]" />
        <span className="w-1 bg-black" />
        <CadButton teal d="M10 3v14" />
        <p className="pl-1 pt-1.5 whitespace-nowrap">&lt;M1&gt; - Select first corner</p>
    </div>
);

const statusCells = [
    ['146/246', 'w-[50px] text-[11px]'],
    ['PKG338.jpg', 'w-[84px] text-[11px]', true],
    ['121.0 KB', 'w-[52px] text-[11px]'],
    ['1240x583x24b jpeg', 'w-[104px] text-[11px]'],
    ['100%', 'w-[37px] text-[11px]'],
    ['双三次插值', 'w-[68px] text-xs'],
    ['已载入于 0.0 秒', 'w-[86px] text-xs'],
    ['', 'flex-1'],
];

const Viewer = () => (
    <section className={clsx('absolute left-[522px] right-0 top-[88px] h-[695px] flex flex-col border-t border-l border-[#d4d0c8] border-b-2 border-b-[#404040] bg-[#d4d0c8] text-xs', SANS)}>
        <div className="flex-1 min-h-0 flex flex-col border-t border-l border-white pt-px pl-px">
            <div className="h-[18px] shrink-0 flex items-center gap-0.5 pl-0.5 bg-gradient-to-r from-[#0a246a] to-[#84a6d4]">
                <Svg>
                    <path d="M0 0h16v16H0z" fill="#102040" />
                    <path d="M0 0h16v8C12 3 6 2 0 5z" fill="#28a83c" />
                    <path d="M0 9c4-5 9-4 15 3-6 3-11 3-15-3z" fill="#fff" />
                    <circle cx="7" cy="9.5" r="3" fill="#2c5db0" />
                    <circle cx="7" cy="9.5" r="1.5" fill="#000" />
                </Svg>
                <h2 className="text-xs leading-4 font-bold text-white">PKG338.jpg - ACDSee v5.0</h2>
            </div>
            <nav className="h-5 shrink-0 flex items-center pl-1.5 leading-4">
                {viewerMenus.map(([name, key]) => (
                    <button key={key} className="w-[50px] text-left">{name}(<u>{key}</u>)</button>
                ))}
            </nav>
            <div className="h-[47px] shrink-0 flex border-t border-[#808080] border-b-2 border-b-[#606060] shadow-[inset_0_1px_0_#fff] pt-0.5 pl-0.5">
                <span className="w-1 mr-0.5 border-l border-white border-r border-r-[#808080]" />
                {viewerTools.map((tool, i) => {
                    if (tool === '|') return <span key={i} className="w-0.5 mx-0.5 my-0.5 border-l border-[#808080] border-r border-r-white" />;
                    if (tool === 'v') return <button key={i} aria-label="zoom options" className="w-2.5 pb-3.5 flex items-center"><Caret /></button>;
                    if (tool === 'V') return <button key={i} aria-label="options" className="w-4 flex items-center justify-center"><Caret /></button>;
                    return (
                        <button key={i} className={clsx('shrink-0 flex flex-col items-center gap-0.5 leading-4 whitespace-nowrap', tool.w)}>
                            <Svg size={24} box={24}>{viewerIcons[tool.icon]}</Svg>
                            {tool.label}
                        </button>
                    );
                })}
            </div>
            <div className="flex-1 min-h-0 flex flex-col overflow-hidden border-t border-black">
                <div className="flex-1 min-h-0 flex">
                    <LayerPanel />
                    <DrillTable />
                </div>
                <CommandStrip />
            </div>
            <div className={clsx('h-5 shrink-0 flex gap-0.5 py-px leading-4 whitespace-nowrap', ARIAL)}>
                {statusCells.map(([text, width, jpg]) => (
                    <span key={text} className={clsx('shrink-0 px-0.5 flex items-center gap-1 border border-t-[#808080] border-l-[#808080] border-r-white border-b-white', width)}>
                        {jpg && (
                            <Svg>
                                <path d="M4 .5h10v15H4z" fill="#fff" stroke="#000" />
                                <path d="M0 4h15v8H0z" fill="#6b7a1c" />
                                <text x="1" y="11" fontSize="7" fontWeight="700" fill="#fff">JPG</text>
                            </Svg>
                        )}
                        {text}
                    </span>
                ))}
            </div>
        </div>
    </section>
);

/* ---------- Annotations and IME bar ---------- */

const Annotations = () => (
    <div className="absolute inset-0 pointer-events-none">
        <p className={clsx('absolute left-[313px] top-[525px] w-[131px] h-[124px] bg-white pl-[7px] pt-2 text-[19px] leading-[19px] text-[#d020d0]', SANS)}>
            此把孔控制公差后会取特殊刀，建议忽略公差
        </p>
        <div className="absolute left-[155px] top-[403px] w-[306px] h-[30px] border-2 border-[#e020e0] shadow-[2px_2px_4px_#777,inset_2px_2px_4px_#999]" />
        <div className="absolute left-[870px] top-[490px] w-[235px] h-11 border-2 border-[#e020e0]" />
        <svg className="absolute inset-0 size-full" fill="none">
            <g opacity="0.5" stroke="#10ff80" strokeWidth="5" strokeLinecap="round">
                <path d="M424 418L1136 508" />
                <path d="M446 571L932 511" />
            </g>
            <path d="M1136 498l18 12-21 5z" fill="#10ff80" opacity="0.5" />
        </svg>
    </div>
);

const ImeBar = () => (
    <div className={clsx('absolute left-[1209px] bottom-0 w-[149px] h-[19px] pl-0.5 pr-2 flex items-center justify-between bg-[#f6fafe] border border-[#9cc4e4] border-b-0 text-[#4a8cd0]', SANS)}>
        <Svg size={18}>
            <path d="M1 2l13-1 1 13-13 1z" fill="#e04a1c" />
            <path d="M12 4.5C8 3 4 4 5 6.5c1 2 6 1 6 3.5 0 2-4 2-7 1" stroke="#fff" strokeWidth="2" />
        </Svg>
        <button className="text-base leading-4 font-bold">中</button>
        <Svg><path d="M9 2c6 3 5 11-2 12-3 0-5-1-6-3 6 1 9-3 8-9z" fill="#4a8cd0" /></Svg>
        <Svg>
            <circle cx="5" cy="5" r="2" stroke="#4a8cd0" />
            <path d="M10 9h2v3l-2 2" stroke="#4a8cd0" strokeWidth="1.5" />
        </Svg>
        <Svg size={18}>
            <path d="M0 3h16v10H0z" fill="#4a8cd0" />
            <path d="M2 5.5h12M2 8h12" stroke="#fff" strokeDasharray="1.5 1" />
            <path d="M4 11h8" stroke="#fff" />
        </Svg>
        <Svg>
            <circle cx="8" cy="4.5" r="3" fill="#a8adb2" />
            <path d="M4 8.5h8l1 5H3z" fill="#a8adb2" />
        </Svg>
        <Svg><path d="M1 13l6-6c-1-4 2-6 5-5L10 4l2 2 2.5-2c1 4-2 6-5 5l-6 6z" fill="#4a8cd0" /></Svg>
    </div>
);

export default function App() {
    return (
        <div className="relative h-screen flex flex-col overflow-hidden bg-[#d4d0c8] text-black">
            <ExcelTop />
            <Sheet />
            <ExcelBottom />
            <Viewer />
            <Annotations />
            <ImeBar />
        </div>
    );
}
